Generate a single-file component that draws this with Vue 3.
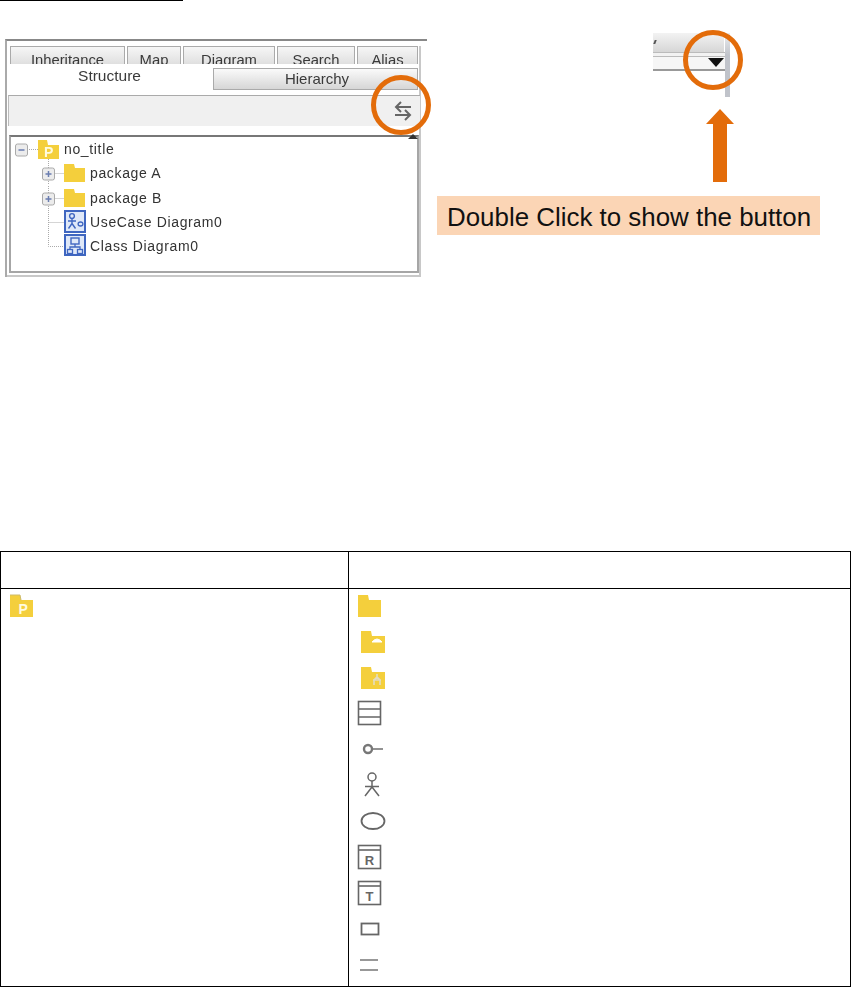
<template>
  <div class="page">
    <div class="heading-rule"></div>

    <section class="figures">
      <!-- left: project tree panel -->
      <div class="panel-wrap">
        <div class="panel">
          <div class="panel-body">
            <div class="tabs-back">
              <div v-for="tab in backTabs" :key="tab.label" class="tab-back" :style="{ width: tab.width + 'px' }">
                {{ tab.label }}
              </div>
            </div>
            <div class="tabs-front">
              <div class="tab-active">Structure</div>
              <div class="tab-idle">Hierarchy</div>
            </div>
            <div class="toolbar">
              <svg class="swap" width="18" height="24" viewBox="0 0 18 24">
                <path d="M17 8H2M7 3 2 8l5 5" fill="none" stroke="#666" stroke-width="2" />
                <path d="M1 16h15M11 11l5 5-5 5" fill="none" stroke="#666" stroke-width="2" />
              </svg>
            </div>
            <span class="toolbar-arrow"></span>
            <div class="tree">
              <div v-for="row in treeRows" :key="row.label" class="tree-row">
                <svg class="gutter" :width="row.gutter" height="24" :viewBox="`0 0 ${row.gutter} 24`">
                  <!-- dotted connectors -->
                  <path v-if="row.gutter > 60" :d="row.last ? 'M38.5 0V12.5H54' : 'M38.5 0V24M38.5 12.5H54'" fill="none" stroke="#aaa" stroke-dasharray="1 1" />
                  <path v-else d="M17 12.5H28M38.5 22V24" fill="none" stroke="#aaa" stroke-dasharray="1 1" />

                  <g v-if="row.toggle" :transform="`translate(${row.gutter > 60 ? 32 : 5} 6.5)`">
                    <rect x="0.5" y="0.5" width="12" height="12" rx="2" fill="#ececec" stroke="#aaa" />
                    <path d="M3.5 6.5h6" stroke="#6a7db0" stroke-width="1.5" />
                    <path v-if="row.toggle === 'plus'" d="M6.5 3.5v6" stroke="#6a7db0" stroke-width="1.5" />
                  </g>

                  <g v-if="row.icon === 'project'">
                    <path d="M28 3h9l1 5h11v14H28z" fill="#f4cf3c" />
                    <text x="34" y="20" class="p-mark">P</text>
                  </g>
                  <path v-if="row.icon === 'folder'" d="M54 3h10l1 4h10v14H54z" fill="#f4cf3c" />

                  <g v-if="row.icon === 'usecase'">
                    <rect x="55" y="1" width="20" height="21" fill="#dfe8f8" stroke="#3f66c0" stroke-width="2" />
                    <circle cx="62" cy="6" r="2.4" fill="none" stroke="#3f66c0" stroke-width="1.4" />
                    <path d="M62 8.5v5M58 11h8M62 13.5l-3.5 5M62 13.5l3.5 5" fill="none" stroke="#3f66c0" stroke-width="1.4" />
                    <ellipse cx="70.5" cy="14" rx="2.4" ry="2" fill="none" stroke="#3f66c0" stroke-width="1.3" />
                  </g>
                  <g v-if="row.icon === 'class'">
                    <rect x="55" y="1" width="20" height="20" fill="#dfe8f8" stroke="#3f66c0" stroke-width="2" />
                    <rect x="61" y="4" width="8" height="6" fill="none" stroke="#3f66c0" stroke-width="1.4" />
                    <path d="M65 10v3M60 16v-3h10v3" fill="none" stroke="#3f66c0" stroke-width="1.3" />
                    <rect x="57.5" y="15.5" width="5" height="4" fill="none" stroke="#3f66c0" stroke-width="1.3" />
                    <rect x="67.5" y="15.5" width="5" height="4" fill="none" stroke="#3f66c0" stroke-width="1.3" />
                  </g>
                </svg>
                <span class="tree-label">{{ row.label }}</span>
              </div>
            </div>
          </div>
        </div>
        <div class="ring ring-left"></div>
      </div>

      <!-- right: hint about the hidden button -->
      <div class="hint">
        <div class="crop-wrap">
          <div class="crop">
            <div class="crop-top"><span class="crop-mark"></span></div>
            <div class="crop-band"></div>
            <div class="crop-bar"><span class="crop-arrow"></span></div>
            <div class="crop-edge"></div>
          </div>
          <div class="ring ring-right"></div>
        </div>
        <svg class="up-arrow" width="30" height="74" viewBox="0 0 30 74">
          <path d="M15 0 29 15H22V73H8V15H1z" fill="#e36c0a" />
        </svg>
        <div class="hint-label">Double Click to show the button</div>
      </div>
    </section>

    <section class="icon-table">
      <div class="cell head"></div>
      <div class="cell head last"></div>
      <div class="cell">
        <svg width="32" height="36" viewBox="0 0 32 36" class="left-icon">
          <path d="M0 6h10l1 5h12v17H0z" fill="#f4cf3c" />
          <path d="M0 6h10l1 5" fill="none" stroke="#cdbb6a" />
          <text x="8.5" y="25" class="p-mark table-p">P</text>
        </svg>
      </div>
      <div class="cell last icon-list">
        <svg v-for="item in iconRows" :key="item" width="32" height="36" viewBox="0 0 32 36" class="row-icon">
          <path v-if="item === 'package'" d="M2 6h10l1 5h12v17H2z" fill="#f4cf3c" />
          <g v-if="item === 'subsystem'">
            <path d="M5 6h10l1 5h13v17H5z" fill="#f4cf3c" />
            <path d="M16 17q5-6 10 0z" fill="#fff" stroke="#fff" />
          </g>
          <g v-if="item === 'model'">
            <path d="M5 6h10l1 5h13v17H5z" fill="#f4cf3c" />
            <path d="M17 19h8M21 13v3M18 24v-5l3-3 3 3v5" fill="none" stroke="#e4dcc0" stroke-width="1.6" />
          </g>
          <g v-if="item === 'class'" fill="none" stroke="#666" stroke-width="1.6">
            <rect x="2.5" y="4.5" width="22" height="23" />
            <path d="M2.5 12h22M2.5 20h22" />
          </g>
          <g v-if="item === 'interface'" fill="none" stroke="#777">
            <circle cx="12" cy="16" r="4" stroke-width="2.4" />
            <path d="M16 16h11" stroke-width="1.6" />
          </g>
          <g v-if="item === 'actor'" fill="none" stroke="#666" stroke-width="1.5">
            <circle cx="16" cy="8" r="4" />
            <path d="M16 12v6M9 17.5h14M16 18l-7 9M16 18l7 9" />
          </g>
          <ellipse v-if="item === 'usecase'" cx="17" cy="16" rx="11.5" ry="8" fill="none" stroke="#666" stroke-width="1.8" />
          <g v-if="item === 'requirement' || item === 'test'" fill="none" stroke="#666" stroke-width="1.6">
            <rect x="2.5" y="4.5" width="22" height="23" />
            <path d="M2.5 9h22" />
            <text x="13.5" y="24" class="box-letter">{{ item === 'requirement' ? 'R' : 'T' }}</text>
          </g>
          <rect v-if="item === 'block'" x="5.5" y="10.5" width="17" height="11" fill="none" stroke="#666" stroke-width="1.8" />
          <path v-if="item === 'lines'" d="M4 11h18M4 21h18" fill="none" stroke="#777" stroke-width="1.5" />
        </svg>
      </div>
    </section>
  </div>
</template>

<script setup>
const backTabs = [
  { label: 'Inheritance', width: 115 },
  { label: 'Map', width: 54 },
  { label: 'Diagram', width: 92 },
  { label: 'Search', width: 78 },
  { label: 'Alias', width: 61 },
]

const treeRows = [
  { label: 'no_title', gutter: 54, toggle: 'minus', icon: 'project' },
  { label: 'package A', gutter: 80, toggle: 'plus', icon: 'folder' },
  { label: 'package B', gutter: 80, toggle: 'plus', icon: 'folder' },
  { label: 'UseCase Diagram0', gutter: 80, icon: 'usecase' },
  { label: 'Class Diagram0', gutter: 80, icon: 'class', last: true },
]

const iconRows = [
  'package', 'subsystem', 'model', 'class', 'interface', 'actor',
  'usecase', 'requirement', 'test', 'block', 'lines',
]
</script>

<style>
html, body {
  margin: 0;
  background: #fff;
}
</style>

<style scoped>
.page {
  width: 851px;
  height: 987px;
  font-family: "Liberation Sans", Arial, sans-serif;
  color: #333;
  overflow: hidden;
}

.heading-rule {
  width: 183px;
  height: 1px;
  background: #000;
}

.figures {
  display: flex;
  align-items: flex-start;
  height: 550px;
}

.panel-wrap {
  position: relative;
  margin: 38px 0 0 5px;
}

.panel {
  width: 422px;
  height: 238px;
  box-sizing: border-box;
  padding-top: 5px;
  border-top: 2px solid #888;
  border-left: 2px solid #aaa;
  filter: blur(0.45px);
  font-size: 15.5px;
  overflow: hidden;
}

.panel-body {
  position: relative;
  width: 414px;
  height: 231px;
  box-sizing: border-box;
  border-right: 2px solid #c8c8c8;
  border-bottom: 2px solid #c8c8c8;
}

.tabs-back {
  display: flex;
  gap: 2px;
  height: 18px;
  padding-left: 3px;
  overflow: hidden;
}

.tab-back {
  box-sizing: border-box;
  height: 24px;
  border: 1px solid #aaa;
  background: linear-gradient(#f6f6f6, #d9d9d9);
  text-align: center;
  font-size: 14.8px;
  line-height: 24px;
  padding-top: 1px;
  color: #3a3a3a;
}

.tabs-front {
  display: flex;
  align-items: flex-start;
  height: 31px;
  margin-left: -1px;
}

.tab-active {
  width: 207px;
  height: 30px;
  background: #fff;
  text-align: center;
  line-height: 24px;
  color: #3a3a3a;
}

.tab-idle {
  width: 205px;
  height: 22px;
  margin-top: 4px;
  padding-left: 3px;
  box-sizing: border-box;
  border: 1px solid #aaa;
  background: linear-gradient(#fafafa, #d6d6d6);
  text-align: center;
  font-size: 15px;
  line-height: 19px;
  color: #3a3a3a;
}

.toolbar {
  display: flex;
  justify-content: flex-end;
  align-items: center;
  height: 30px;
  margin: 0 -1px 0 1px;
  padding-right: 8px;
  background: #f0f0f0;
  border-top: 1px solid #aaa;
  border-left: 1px solid #bbb;
}

.toolbar-arrow {
  position: absolute;
  right: 1px;
  top: 88px;
  width: 0;
  height: 0;
  border-left: 5px solid transparent;
  border-right: 5px solid transparent;
  border-bottom: 5px solid #333;
}

.tree {
  margin: 9px 0 0 2px;
  height: 138px;
  box-sizing: border-box;
  border: 2px solid #a6a6a6;
  border-top-color: #777;
  background: #fff;
}

.tree-row {
  display: flex;
  align-items: center;
  height: 24.3px;
}

.gutter {
  flex: none;
  margin-left: -1px;
  overflow: visible;
}

.tree-label {
  letter-spacing: 0.65px;
  font-size: 14px;
  color: #333;
  white-space: nowrap;
}

.p-mark {
  font-family: "Liberation Sans", Arial, sans-serif;
  font-size: 14px;
  font-weight: 700;
  fill: #fffbe0;
}

.table-p {
  font-size: 14px;
}

.ring {
  position: absolute;
  width: 60px;
  height: 60px;
  box-sizing: border-box;
  border: 5px solid #e36c0a;
  border-radius: 50%;
}

.ring-left {
  left: 366px;
  top: 36px;
}

.hint {
  display: flex;
  flex-direction: column;
  align-items: flex-end;
  margin: 29px 0 0 10px;
  width: 383px;
}

.crop-wrap {
  position: relative;
  width: 89px;
  height: 67px;
  margin-right: 78px;
  padding-top: 3px;
  box-sizing: border-box;
}

.crop {
  width: 77px;
  height: 64px;
  filter: blur(0.4px);
  position: relative;
}

.crop-top {
  position: relative;
  height: 19px;
  width: 71px;
  background: linear-gradient(#f3f3f3, #d6d6d6);
}

.crop-mark {
  position: absolute;
  left: 1px;
  top: 7px;
  width: 2px;
  height: 4px;
  background: #555;
  transform: skewX(-20deg);
}

.crop-band {
  width: 72px;
  height: 5px;
  box-sizing: border-box;
  background: #f2f2f2;
  border-top: 1px solid #bbb;
  border-bottom: 1px solid #bbb;
}

.crop-bar {
  display: flex;
  justify-content: flex-end;
  width: 72px;
  height: 14px;
  padding-right: 1px;
  box-sizing: border-box;
  background: #f6f6f6;
  border-bottom: 2px solid #999;
}

.crop-arrow {
  width: 0;
  height: 0;
  margin-top: 1px;
  border-left: 8px solid transparent;
  border-right: 8px solid transparent;
  border-top: 9px solid #111;
}

.crop-edge {
  position: absolute;
  right: 0;
  top: 0;
  width: 5px;
  height: 64px;
  background: linear-gradient(#eceef0, #c0c3ca 35%);
}

.ring-right {
  left: 30px;
  top: 0;
}

.up-arrow {
  display: block;
  margin: 12px 85px 0 0;
}

.hint-label {
  width: 383px;
  height: 39px;
  margin-top: 13px;
  box-sizing: border-box;
  padding-left: 10px;
  background: #fbd5b5;
  color: #111;
  font-size: 25.9px;
  line-height: 42px;
  white-space: nowrap;
}

.icon-table {
  display: grid;
  grid-template-columns: 348px 1fr;
  grid-template-rows: 37px 398px;
  width: 851px;
  box-sizing: border-box;
  border-top: 1px solid #000;
  border-left: 1px solid #000;
}

.cell {
  border-right: 1px solid #000;
  border-bottom: 1px solid #000;
}

.left-icon {
  display: block;
  margin-left: 9px;
}

.icon-list {
  display: flex;
  flex-direction: column;
  padding-left: 7px;
}

.row-icon {
  display: block;
  flex: none;
}

.box-letter {
  font-family: "Liberation Sans", Arial, sans-serif;
  font-size: 13px;
  font-weight: 700;
  text-anchor: middle;
  fill: #666;
  stroke: none;
}
</style>
